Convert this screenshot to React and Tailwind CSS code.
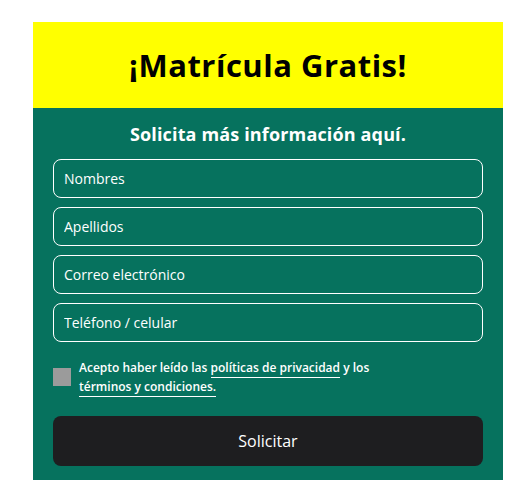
import React from "react"

const font = { fontFamily: "'Open Sans', 'Noto Sans', sans-serif" }

function Field({ placeholder }) {
  return (
    <input
      type="text"
      placeholder={placeholder}
      className="h-[39px] w-full rounded-lg border border-white bg-transparent px-[10px] text-[14px] text-white placeholder:text-white outline-none"
    />
  )
}

export default function App() {
  return (
    <div className="min-h-[495px] bg-white pt-[22px] pl-[33px]" style={font}>
      <div className="w-[470px]">
        <div className="flex h-[86px] items-center justify-center bg-[#ffff00]">
          <h1 className="text-[31px] font-bold tracking-[0.5px] text-black">¡Matrícula Gratis!</h1>
        </div>

        <div className="bg-[#06725e] px-[20px] pt-[14px] pb-[14px]">
          <h2 className="text-center text-[18px] font-bold leading-[24px] tracking-[0.15px] text-white">Solicita más información aquí.</h2>

          <form className="mt-[13px] flex flex-col gap-[9px]">
            <Field placeholder="Nombres" />
            <Field placeholder="Apellidos" />
            <Field placeholder="Correo electrónico" />
            <Field placeholder="Teléfono / celular" />
          </form>

          <div className="mt-[16px] flex items-center gap-[8px]">
            <span className="h-[18px] w-[18px] shrink-0 bg-[#9b9b9b]" />
            <p className="text-[12px] font-semibold leading-[19px] text-white">
              Acepto haber leído las <a className="border-b border-white pb-[1px]">políticas de privacidad</a> y los
              <br />
              <a className="border-b border-white pb-[1px]">términos y condiciones.</a>
            </p>
          </div>

          <button className="mt-[20px] flex h-[50px] w-full items-center justify-center rounded-lg bg-[#1e1e20] text-[16px] text-white">
            Solicitar
          </button>
        </div>
      </div>
    </div>
  )
}
